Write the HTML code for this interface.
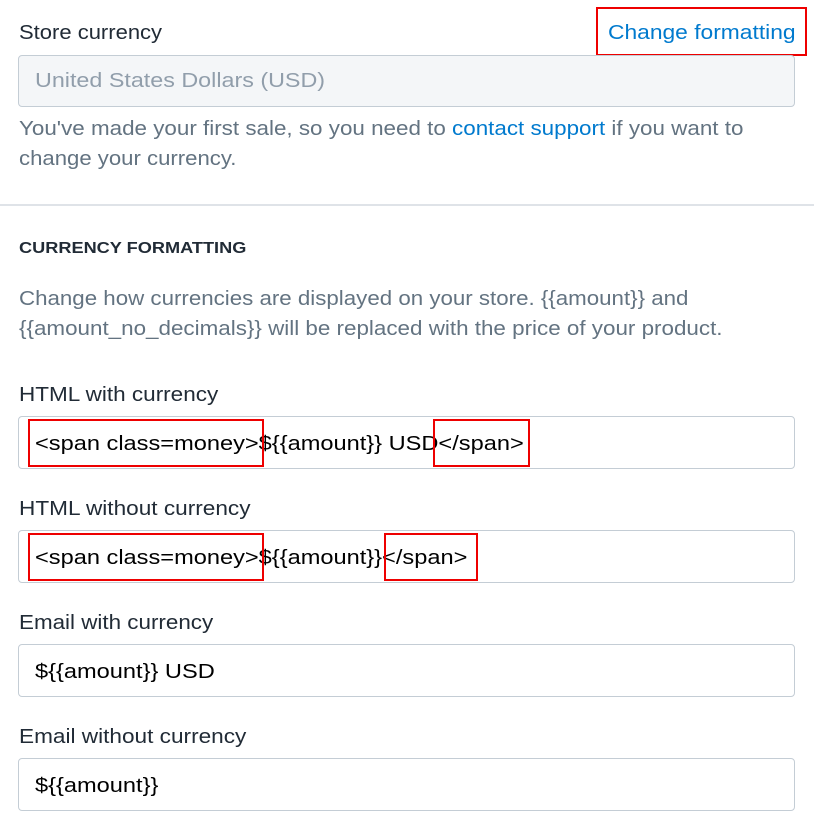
<!DOCTYPE html>
<html><head><style>
body{margin:0;width:814px;height:826px;background:#fff;font-family:"Liberation Sans",sans-serif;position:relative;overflow:hidden}
.a{position:absolute;white-space:nowrap;transform-origin:0 50%}
.lbl{font-size:20px;color:#212b36;line-height:24px;transform:scaleX(1.125)}
.inp{position:absolute;left:18px;width:777px;height:53px;border:1px solid #c4cdd5;border-radius:4px;background:#fff;box-sizing:border-box}
.it{position:absolute;left:35px;font-size:20px;color:#000;line-height:24px;white-space:nowrap;transform-origin:0 50%;transform:scaleX(1.18)}
.rb{position:absolute;border:2px solid #e00;box-sizing:border-box}
.help{font-size:20px;color:#637381;line-height:30px;transform:scaleX(1.12)}
</style></head><body>
<div class="a lbl" style="left:19px;top:21px;transform:scaleX(1.1)">Store currency</div>
<div class="a lbl" style="left:608px;top:21px;color:#007ace;transform:scaleX(1.14)">Change formatting</div>
<div class="rb" style="left:596px;top:7px;width:211px;height:49px"></div>
<div class="inp" style="top:55px;height:52px;background:#f4f6f8"></div>
<div class="it" style="top:69px;color:#919eab;transform:scaleX(1.165)">United States Dollars (USD)</div>
<div class="a help" style="left:19px;top:114px">You've made your first sale, so you need to <span style="color:#007ace">contact support</span> if you want to</div>
<div class="a help" style="left:19px;top:144px;transform:scaleX(1.107)">change your currency.</div>
<div class="a" style="left:0;top:204px;width:814px;height:2px;background:#dfe3e8"></div>
<div class="a" style="left:19px;top:239px;font-size:16px;font-weight:bold;color:#212b36;line-height:20px;transform:scaleX(1.135)">CURRENCY FORMATTING</div>
<div class="a help" style="left:19px;top:284px;transform:scaleX(1.115)">Change how currencies are displayed on your store. {{amount}} and</div>
<div class="a help" style="left:19px;top:314px">{{amount_no_decimals}} will be replaced with the price of your product.</div>

<div class="a lbl" style="left:19px;top:383px">HTML with currency</div>
<div class="inp" style="top:416px"></div>
<div class="it" style="top:432px">&lt;span class=money&gt;${{amount}} USD&lt;/span&gt;</div>
<div class="rb" style="left:28px;top:419px;width:236px;height:48px"></div>
<div class="rb" style="left:433px;top:419px;width:97px;height:48px"></div>

<div class="a lbl" style="left:19px;top:497px;transform:scaleX(1.13)">HTML without currency</div>
<div class="inp" style="top:530px"></div>
<div class="it" style="top:546px">&lt;span class=money&gt;${{amount}}&lt;/span&gt;</div>
<div class="rb" style="left:28px;top:533px;width:236px;height:48px"></div>
<div class="rb" style="left:384px;top:533px;width:94px;height:48px"></div>

<div class="a lbl" style="left:19px;top:611px;transform:scaleX(1.12)">Email with currency</div>
<div class="inp" style="top:644px"></div>
<div class="it" style="top:660px">${{amount}} USD</div>

<div class="a lbl" style="left:19px;top:725px;transform:scaleX(1.13)">Email without currency</div>
<div class="inp" style="top:758px"></div>
<div class="it" style="top:774px">${{amount}}</div>
</body></html>
